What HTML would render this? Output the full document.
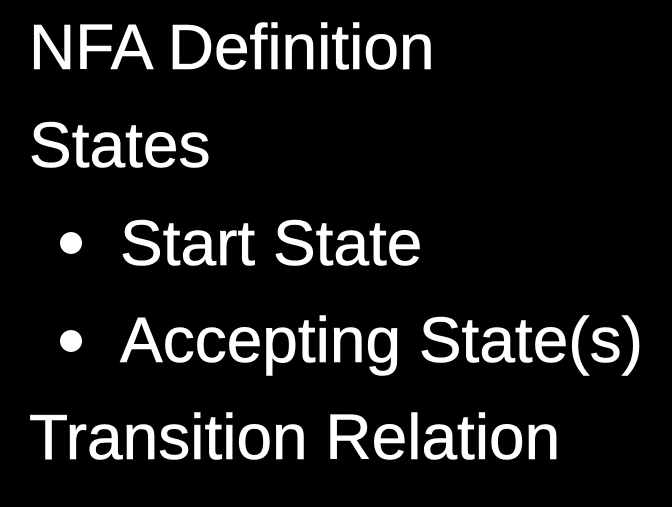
<!DOCTYPE html>
<html><head><style>
html,body{margin:0;padding:0;background:#000;width:672px;height:507px;overflow:hidden}
.t{position:absolute;color:#fff;font-family:"Liberation Sans",Arial,sans-serif;font-size:64px;line-height:64px;white-space:nowrap;-webkit-text-stroke:0.6px #fff}
.b{position:absolute;width:22px;height:22px;border-radius:50%;background:#fff}
</style></head><body>
<div class="t" style="left:29px;top:15px">NFA Definition</div>
<div class="t" style="left:29px;top:113px">States</div>
<div class="b" style="left:60px;top:232px"></div>
<div class="t" style="left:120px;top:211px">Start State</div>
<div class="b" style="left:60px;top:330px"></div>
<div class="t" style="left:120px;top:308px">Accepting State(s)</div>
<div class="t" style="left:29px;top:405px">Transition Relation</div>
</body></html>
